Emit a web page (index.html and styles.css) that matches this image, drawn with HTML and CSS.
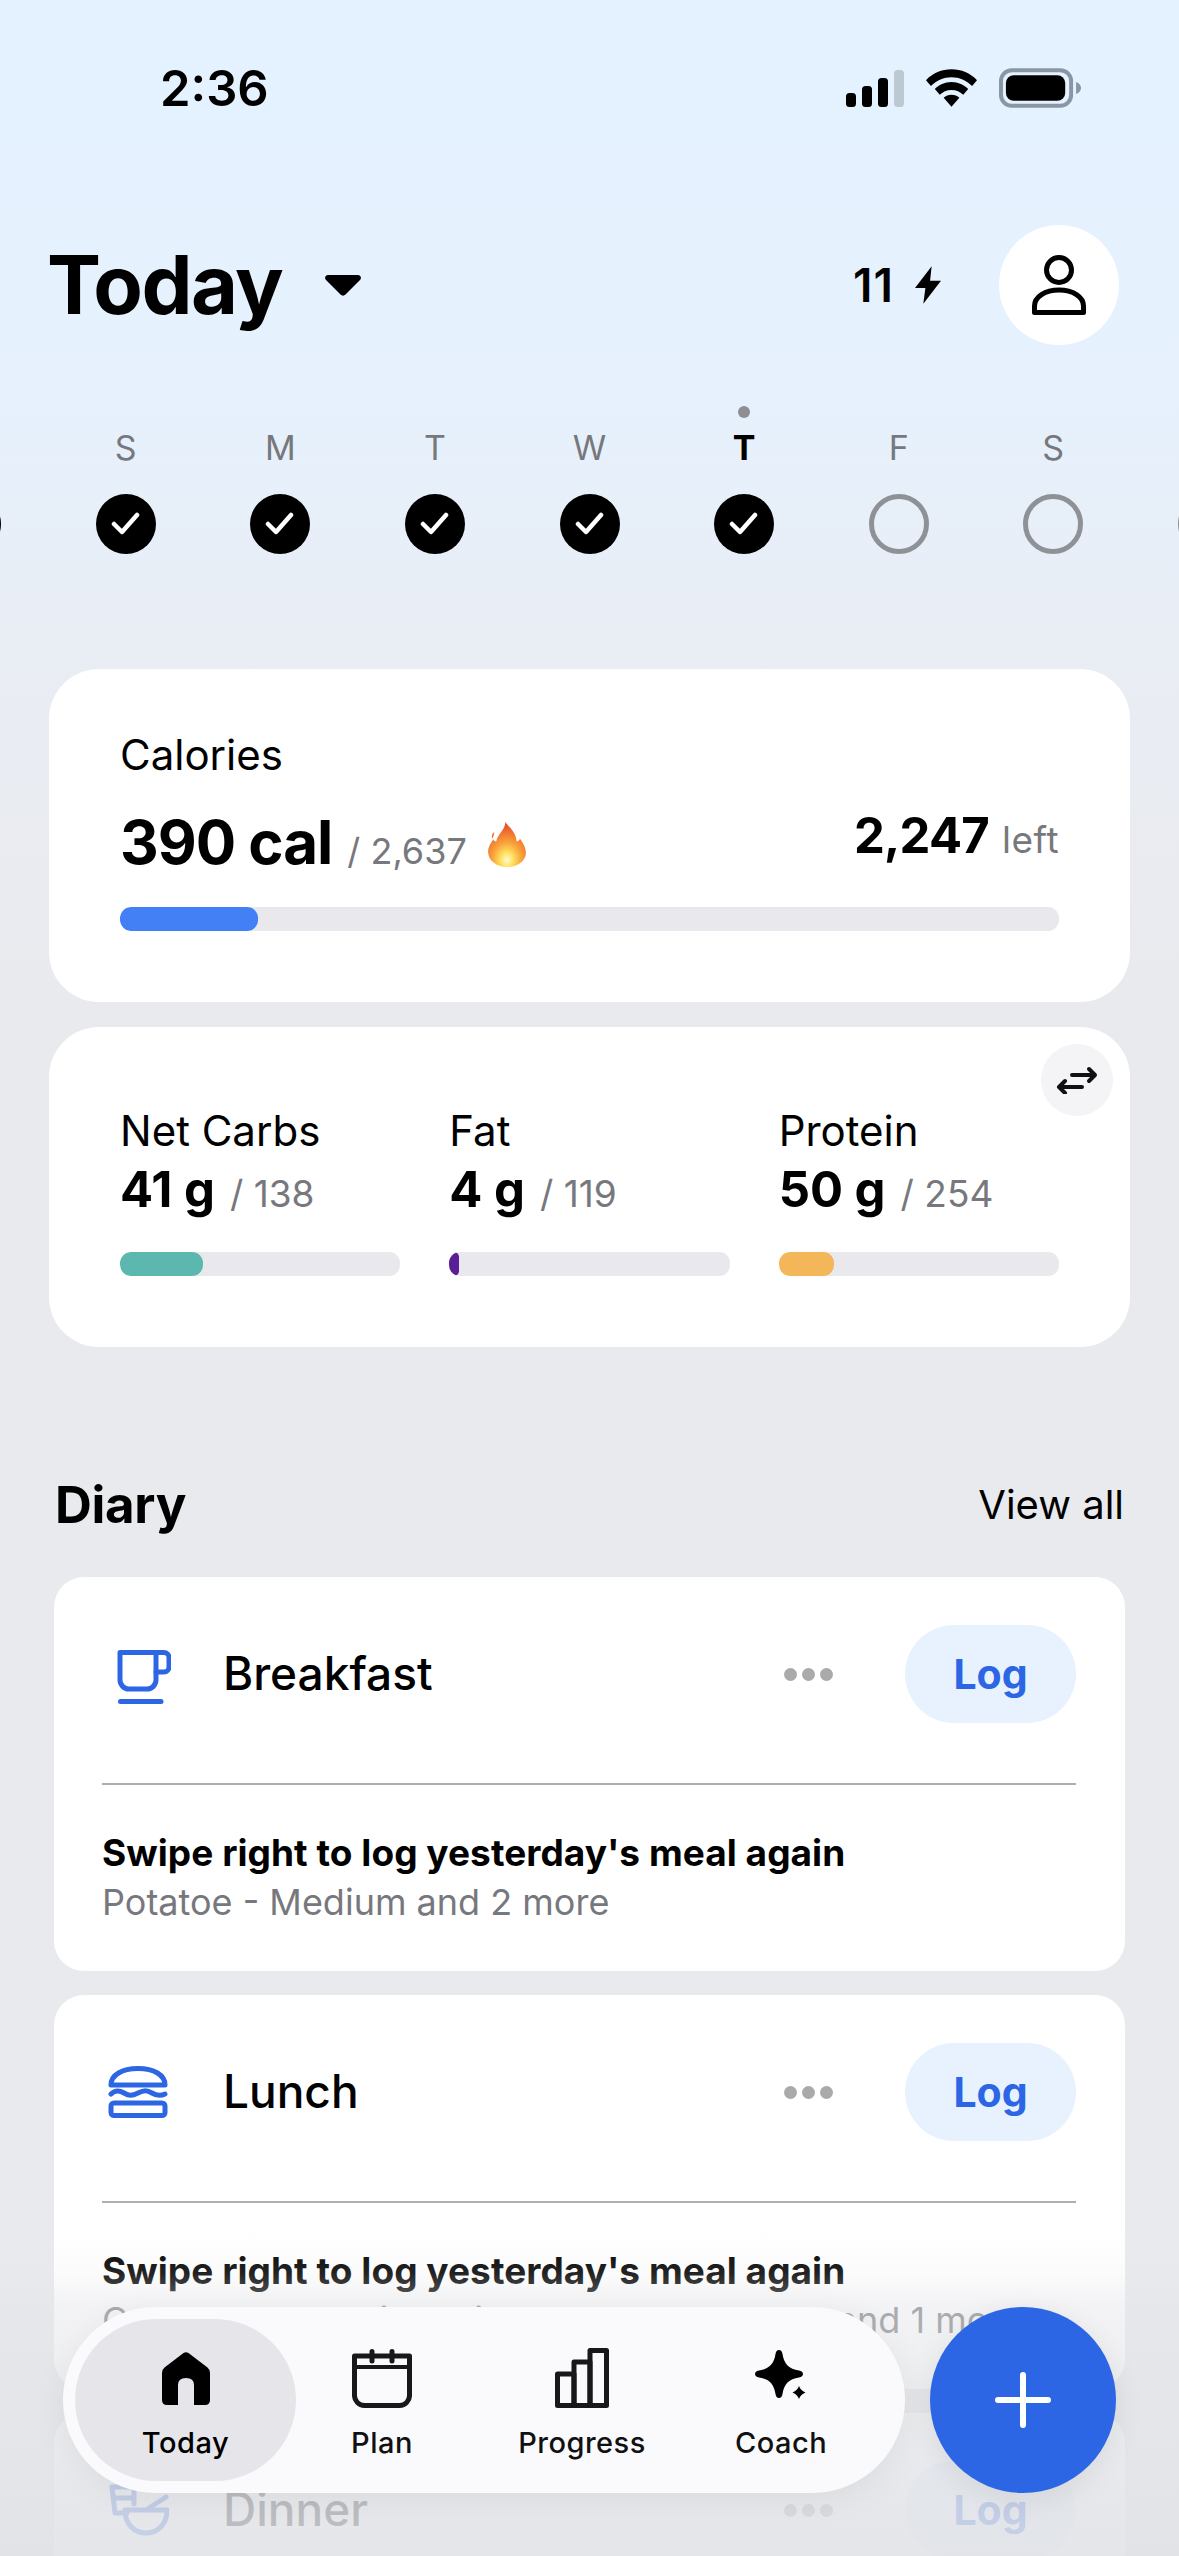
FILE: index.html
```html
<!DOCTYPE html>
<html lang="en">
<head>
<meta charset="utf-8">
<title>Today</title>
<link rel="stylesheet" href="styles.css">
</head>
<body>
<div class="page">
  <div class="status">
    <span class="time">2:36</span>
    <div class="status-icons">
      <svg class="signal" width="58" height="37" viewBox="0 0 58 37"><rect x="0" y="23" width="10" height="14" rx="3.5"/><rect x="16" y="16" width="10" height="21" rx="3.5"/><rect x="32" y="8" width="10" height="29" rx="3.5"/><rect class="dim" x="48" y="0" width="10" height="37" rx="3.5"/></svg>
      <svg class="wifi" width="51" height="38" viewBox="0 0 52 38"><path d="M26 0C36 0 45 4 52 11l-5 6C41 11 34 8 26 8S11 11 5 17L0 11C7 4 16 0 26 0Z"/><path d="M26 13c7 0 13 3 17 7l-5 6c-3-3-7-5-12-5s-9 2-12 5L9 20c4-4 10-7 17-7Z"/><path d="M26 26c3 0 6 1 8 3l-8 9-8-9c2-2 5-3 8-3Z"/></svg>
      <svg class="battery" width="82" height="40" viewBox="0 0 83 40"><rect class="batt-ring" x="2" y="2" width="71" height="36" rx="11"/><rect x="7" y="7" width="60" height="26" rx="8"/><path class="batt-nub" d="M78 14c3 1 5 3 5 6s-2 5-5 6Z"/></svg>
    </div>
  </div>

  <header class="topbar">
    <div class="title-wrap">
      <h1 class="title">Today</h1>
      <svg class="caret" width="36" height="21" viewBox="0 0 36 21"><path d="M3 0H33C35.500 0 37 3 35 5L20.500 19.500C19 21 17 21 15.500 19.500L1 5C-1 3 .5 0 3 0Z"/></svg>
    </div>
    <div class="top-actions">
      <span class="streak">11</span>
      <svg class="bolt" width="26" height="38" viewBox="0 0 25 36"><path d="M16 0 0 21h10L8 36 25 14H14.500Z"/></svg>
      <div class="avatar">
        <svg width="54" height="60" viewBox="0 0 54 60" fill="none" stroke="#000" stroke-width="5" stroke-linejoin="round"><circle cx="27" cy="15" r="12.500"/><path d="M2.500 57.500V51C2.500 42 13 35 27 35S51.500 42 51.500 51V57.500Z"/></svg>
      </div>
    </div>
  </header>

  <div class="week">
    <div class="day"><span class="now-dot none"></span><span class="day-label"></span><span class="mark done"></span></div>
    <div class="day"><span class="now-dot none"></span><span class="day-label">S</span><span class="mark done"><svg width="30" height="26" viewBox="0 0 30 26"><path d="M3 13 11 21 26 4"/></svg></span></div>
    <div class="day"><span class="now-dot none"></span><span class="day-label">M</span><span class="mark done"><svg width="30" height="26" viewBox="0 0 30 26"><path d="M3 13 11 21 26 4"/></svg></span></div>
    <div class="day"><span class="now-dot none"></span><span class="day-label">T</span><span class="mark done"><svg width="30" height="26" viewBox="0 0 30 26"><path d="M3 13 11 21 26 4"/></svg></span></div>
    <div class="day"><span class="now-dot none"></span><span class="day-label">W</span><span class="mark done"><svg width="30" height="26" viewBox="0 0 30 26"><path d="M3 13 11 21 26 4"/></svg></span></div>
    <div class="day current"><span class="now-dot"></span><span class="day-label">T</span><span class="mark done"><svg width="30" height="26" viewBox="0 0 30 26"><path d="M3 13 11 21 26 4"/></svg></span></div>
    <div class="day"><span class="now-dot none"></span><span class="day-label">F</span><span class="mark open"></span></div>
    <div class="day"><span class="now-dot none"></span><span class="day-label">S</span><span class="mark open"></span></div>
    <div class="day"><span class="now-dot none"></span><span class="day-label"></span><span class="mark open"></span></div>
  </div>

  <main class="main">
    <section class="card cal-card">
      <div class="label">Calories</div>
      <div class="cal-row">
        <div class="cal-left">
          <span class="cal-value">390 cal</span>
          <span class="of cal-of">/ 2,637</span>
          <svg class="flame" width="38" height="46" viewBox="0 0 37 45"><defs><radialGradient id="fl" cx=".5" cy=".84" r=".78"><stop offset="0" stop-color="#fffbd0"/><stop offset=".22" stop-color="#ffdf5c"/><stop offset=".5" stop-color="#f9a23a"/><stop offset="1" stop-color="#e8502a"/></radialGradient></defs><path fill="url(#fl)" d="M17 1C20 6 27 10 28 20c3-1 3-2 3-3 3 4 6 9 6 14 0 8-8 14-18 14S0 39 0 30c0-5 3-9 5-12 1 1 2 2 3 2C9 13 16 10 17 1Z"/><path fill="#ee6a34" d="M6 11c0 2-1 5-2 6-1-2 0-5 2-6Z"/></svg>
        </div>
        <div class="cal-right"><span class="left-value">2,247</span><span class="of left-word">left</span></div>
      </div>
      <div class="bar"><div class="fill fill-blue" style="width:14.7%"></div></div>
    </section>

    <section class="card macro-card">
      <button class="swap" type="button" aria-label="Swap">
        <svg width="42" height="28" viewBox="0 0 42 28" fill="none" stroke="#111" stroke-width="4" stroke-linecap="round" stroke-linejoin="round"><path d="M16 9H39M33 3 39 9 33 15"/><path d="M26 21H3M9 15 3 21 9 27"/></svg>
      </button>
      <div class="macro">
        <div class="label">Net Carbs</div>
        <div class="macro-val"><span class="amount">41 g</span><span class="of macro-of">/ 138</span></div>
        <div class="bar"><div class="fill fill-teal" style="width:29.5%"></div></div>
      </div>
      <div class="macro">
        <div class="label">Fat</div>
        <div class="macro-val"><span class="amount">4 g</span><span class="of macro-of">/ 119</span></div>
        <div class="bar"><div class="fill fill-purple" style="width:3.3%"></div></div>
      </div>
      <div class="macro">
        <div class="label">Protein</div>
        <div class="macro-val"><span class="amount">50 g</span><span class="of macro-of">/ 254</span></div>
        <div class="bar"><div class="fill fill-orange" style="width:19.700%"></div></div>
      </div>
    </section>

    <div class="diary-head">
      <h2 class="diary-title">Diary</h2>
      <span class="view-all">View all</span>
    </div>

    <section class="meal">
      <div class="meal-head">
        <div class="meal-icon">
          <svg class="ic-cup" width="54" height="54" viewBox="0 0 54 54" fill="none" stroke="#2c66e4" stroke-width="5" stroke-linecap="round" stroke-linejoin="round"><path d="M3 2.500H39V30a9 9 0 0 1-9 9H12a9 9 0 0 1-9-9Z"/><path d="M39 2.500H47a5 5 0 0 1 5 5V17a5 5 0 0 1-5 5H39"/><path d="M3.500 51.500H44"/></svg>
        </div>
        <span class="meal-name">Breakfast</span>
        <div class="dots"><i></i><i></i><i></i></div>
        <span class="log">Log</span>
      </div>
      <div class="divider"></div>
      <div class="swipe">Swipe right to log yesterday's meal again</div>
      <div class="sub">Potatoe - Medium and 2 more</div>
    </section>

    <section class="meal">
      <div class="meal-head">
        <div class="meal-icon">
          <svg class="ic-burger" width="60" height="52" viewBox="0 0 60 52" fill="none" stroke="#2c66e4" stroke-width="5" stroke-linecap="round" stroke-linejoin="round"><path d="M3 19C3 9 14 2.500 30 2.500S57 9 57 19Z"/><path d="M3 28C7 24 11 24 16 27S24 30 30 27 39 24 44 27 53 30 57 28"/><rect x="3" y="37" width="54" height="12.500" rx="3"/></svg>
        </div>
        <span class="meal-name">Lunch</span>
        <div class="dots"><i></i><i></i><i></i></div>
        <span class="log">Log</span>
      </div>
      <div class="divider"></div>
      <div class="swipe">Swipe right to log yesterday's meal again</div>
      <div class="sub">Cereal - Oats, mixed rice, sweet corn, yam and 1 more</div>
    </section>

    <section class="meal">
      <div class="meal-head">
        <div class="meal-icon">
          <svg class="ic-bowl" width="60" height="52" viewBox="0 0 60 52" fill="none" stroke="#2c66e4" stroke-width="5" stroke-linecap="round" stroke-linejoin="round"><path d="M18 29H6L3 3H25V20"/><path d="M4 14H24"/><path d="M16 26H58C58 41 48 49 37 49S16 41 16 26Z"/><path d="M40 24 57 13"/></svg>
        </div>
        <span class="meal-name">Dinner</span>
        <div class="dots"><i></i><i></i><i></i></div>
        <span class="log">Log</span>
      </div>
    </section>
  </main>

  <div class="fade"></div>

  <div class="dock">
    <nav class="tabs">
      <a class="tab active">
        <span class="tab-icon"><svg width="48" height="53" viewBox="0 0 48 53"><path d="M21.500 1 2.500 15.500Q0 17.500 0 21V48Q0 53 5 53H16V33Q16 26 24 26T32 33V53H43Q48 53 48 48V21Q48 17.500 45.500 15.500L26.500 1Q24-.5 21.500 1Z"/></svg></span>
        <span class="tab-label">Today</span>
      </a>
      <a class="tab">
        <span class="tab-icon"><svg width="60" height="59" viewBox="0 0 60 59" fill="none" stroke="#18181b" stroke-width="5" stroke-linecap="round" stroke-linejoin="round"><path d="M2.500 7H57.500V46a10 10 0 0 1-10 10.500H12.500A10 10 0 0 1 2.500 46Z"/><path d="M3 18H57" stroke-width="4" /><path d="M20 2.500V12M40 2.500V12"/></svg></span>
        <span class="tab-label">Plan</span>
      </a>
      <a class="tab">
        <span class="tab-icon"><svg width="54" height="60" viewBox="0 0 54 60" fill="none" stroke="#18181b" stroke-width="5" stroke-linejoin="round"><path d="M2.500 26H19V57.500H2.500Z"/><path d="M19 14H35V57.500H19Z"/><path d="M35 2.500H51.500V57.500H35Z"/></svg></span>
        <span class="tab-label">Progress</span>
      </a>
      <a class="tab">
        <span class="tab-icon"><svg width="52" height="56" viewBox="0 0 52 56"><path d="M24 0C26 0 27 1.500 27.500 4 29 14 34 19 44 20.500 46.500 21 48 22 48 24S46.500 27 44 27.500C34 29 29 34 27.500 44 27 46.500 26 48 24 48S21 46.500 20.500 44C19 34 14 29 4 27.500 1.500 27 0 26 0 24S1.500 21 4 20.500C14 19 19 14 20.500 4 21 1.500 22 0 24 0Z"/><path d="M44 36C45 39 47 41 50.500 42.500 47 44 45 46 44 49 43 46 41 44 37.500 42.500 41 41 43 39 44 36Z"/></svg></span>
        <span class="tab-label">Coach</span>
      </a>
    </nav>
    <button class="fab" type="button" aria-label="Add">
      <svg width="56" height="56" viewBox="0 0 56 56" fill="none" stroke="#fff" stroke-width="6" stroke-linecap="round"><path d="M28 3V53M3 28H53"/></svg>
    </button>
  </div>
</div>
</body>
</html>
```
FILE: styles.css
```css
* { box-sizing: border-box; }
html, body { margin: 0; padding: 0; }
body { font-family: Inter, "Noto Sans", sans-serif; color: #000; }
.page {
  position: relative;
  width: 1179px;
  height: 2556px;
  overflow: hidden;
  background: linear-gradient(180deg, #e4f2ff 0, #e6f1fd 400px, #e9edf4 640px, #e9eaee 1000px, #e9eaee 100%);
}

/* status bar */
.status { display: flex; align-items: center; justify-content: space-between; height: 176px; padding: 0 98px 0 160px; margin-bottom: 49px; }
.time { font-size: 49px; font-weight: 600; }
.status-icons { display: flex; align-items: center; gap: 22px; }
.dim { fill: #bcc8d2; }
.batt-ring { fill: none; stroke: #8a97a3; stroke-width: 4; }
.batt-nub { fill: #8a97a3; }

/* top bar */
.topbar { display: flex; align-items: center; justify-content: space-between; height: 120px; padding: 0 60px 0 47px; }
.title-wrap { display: flex; align-items: center; gap: 43px; }
.title { margin: 0; font-size: 81px; font-weight: 700; letter-spacing: -1.500px; line-height: 120px; }
.top-actions { display: flex; align-items: center; }
.streak { font-size: 46px; font-weight: 600; letter-spacing: 1px; margin-right: 21px; }
.bolt { margin-right: 58px; }
.avatar { display: flex; align-items: center; justify-content: center; width: 120px; height: 120px; border-radius: 50%; background: #fff; }

/* week */
.week { display: flex; justify-content: center; margin-top: 61px; }
.day { flex: 0 0 154.600px; display: flex; flex-direction: column; align-items: center; }
.now-dot { width: 12px; height: 12px; border-radius: 50%; background: #8e8e93; }
.now-dot.none { background: none; }
.day-label { height: 44px; margin-top: 8px; font-size: 34px; line-height: 44px; color: #77787d; }
.current .day-label { color: #000; font-weight: 700; }
.mark { display: flex; align-items: center; justify-content: center; flex: 0 0 60px; width: 60px; height: 60px; margin-top: 24px; border-radius: 50%; }
.mark.done { background: #000; }
.mark.done svg { fill: none; stroke: #fff; stroke-width: 4.500; stroke-linecap: round; stroke-linejoin: round; }
.mark.open { border: 5px solid #8e9195; }

/* summary cards */
.main { padding: 0 49px; margin-top: 115px; }
.card { position: relative; background: #fff; border-radius: 50px; }
.cal-card { height: 333px; padding: 61px 71px 0; }
.label { font-size: 42px; line-height: 50px; }
.cal-row { display: flex; justify-content: space-between; align-items: flex-start; height: 127px; }
.cal-left { display: flex; align-items: baseline; margin-top: 26px; }
.cal-value { font-size: 60px; font-weight: 700; letter-spacing: -1px; }
.of { font-size: 36px; color: #77787d; }
.cal-of { margin-left: 15px; }
.flame { margin-left: 21px; align-self: center; position: relative; top: 2px; }
.cal-right { display: flex; align-items: baseline; margin-top: 26px; }
.left-value { font-size: 49px; font-weight: 700; letter-spacing: -.8px; }
.left-word { margin-left: 13px; font-size: 37px; letter-spacing: .5px; }
.bar { height: 24px; border-radius: 11px; background: #e9e9ed; overflow: hidden; }
.fill { height: 100%; border-radius: 11px; }
.fill-blue { background: #4480f5; }
.fill-teal { background: #5cb8ae; }
.fill-purple { background: #5a1e96; }
.fill-orange { background: #f3b759; }

.macro-card { display: flex; gap: 49px; height: 320px; margin-top: 25px; padding: 79px 71px 0; }
.macro { flex: 1 1 0; }
.macro-val { display: flex; align-items: baseline; gap: 15px; height: 96px; padding-top: 2px; }
.macro-of { font-size: 37px; }
.amount { font-size: 49px; font-weight: 700; line-height: 64px; }
.swap { position: absolute; top: 17px; right: 17px; display: flex; align-items: center; justify-content: center; width: 72px; height: 72px; padding: 0; border: 0; border-radius: 50%; background: #f4f4f6; }

/* diary */
.diary-head { display: flex; align-items: center; justify-content: space-between; height: 60px; margin: 127px 6px 43px; }
.diary-title { margin: 0; font-size: 51px; font-weight: 700; letter-spacing: -.3px; }
.view-all { font-size: 40px; }
.meal { margin: 0 5px 24px; padding: 48px 49px 45px 48px; background: #fff; border-radius: 30px; }
.meal-head { display: flex; align-items: center; height: 98px; }
.meal-icon { flex: 0 0 121px; display: flex; }
.ic-cup { margin-left: 15px; margin-top: 6px; }
.ic-burger { margin-left: 6px; }
.ic-bowl { margin-left: 7px; }
.meal-name { flex: 1 1 0; font-size: 46px; font-weight: 500; position: relative; top: -1px; }
.dots { display: flex; gap: 5px; margin-right: 72px; }
.dots i { width: 13px; height: 13px; border-radius: 50%; background: #aaa; }
.log { display: flex; align-items: center; justify-content: center; width: 171px; height: 98px; border-radius: 49px; background: #e7f2fe; color: #2c66e4; font-size: 41px; font-weight: 700; }
.divider { height: 2px; margin: 60px 0 44px; background: #aeaeb0; }
.swipe { font-size: 37px; font-weight: 700; line-height: 48px; letter-spacing: .05px; white-space: nowrap; }
.sub { margin-top: 1px; font-size: 36px; line-height: 48px; color: #77787d; white-space: nowrap; }

/* overlay */
.fade { position: absolute; left: 0; right: 0; top: 2190px; bottom: 0; background: linear-gradient(180deg, rgba(228,229,233,0) 40px, rgba(228,229,233,.15) 83px, rgba(228,229,233,.45) 115px, rgba(226,227,231,.82) 300px, rgba(225,226,230,.86) 100%); }

/* dock */
.dock { position: absolute; left: 63px; top: 2307px; display: flex; gap: 25px; }
.tabs { display: grid; grid-template-columns: 221px 172px 228px 170px; height: 186px; width: 842px; padding: 12px; border-radius: 93px; background: #fafafd; box-shadow: 0 6px 36px rgba(0, 0, 0, .06); }
.tab { display: flex; flex-direction: column; align-items: center; padding-top: 29px; color: #111; }
.tab.active { border-radius: 81px; background: #e6e6ea; color: #000; }
.tab-icon { display: flex; align-items: center; justify-content: center; height: 60px; }
.tab-label { margin-top: 17px; font-size: 29px; line-height: 36px; font-weight: 500; letter-spacing: .5px; }
.fab { display: flex; align-items: center; justify-content: center; width: 186px; height: 186px; padding: 0; border: 0; border-radius: 50%; background: #2c66e4; box-shadow: 0 6px 30px rgba(0, 0, 0, .08); }
```
